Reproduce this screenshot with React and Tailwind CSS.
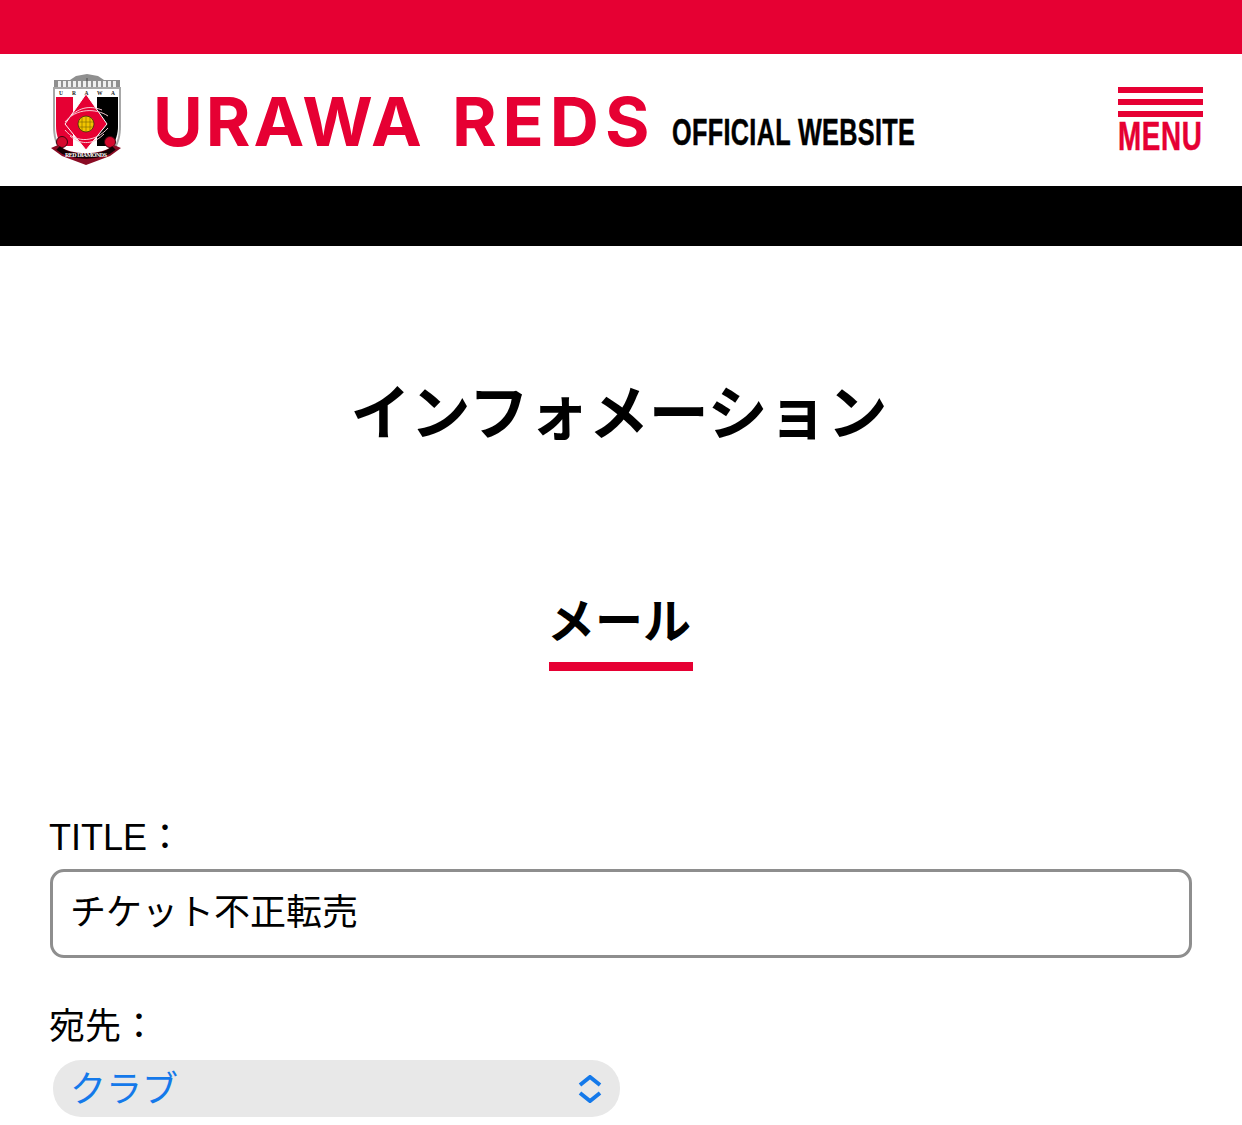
const jp = "font-['Liberation_Sans','Noto_Sans_CJK_JP',sans-serif]";
const cjk = "font-['Noto_Sans_CJK_JP','Noto_Sans',sans-serif]";

function Crest() {
  return (
    <svg width="74" height="94" viewBox="0 0 74 94" className="shrink-0 mt-[2px]">
      <path d="M4 6 L20 6 L26 2 L37 0 L48 2 L54 6 L70 6 L70 14 L4 14 Z" fill="#8f8f8f" />
      <path d="M8 7h58v6H8z" fill="#f0f0f0" />
      <path d="M12 7v6M17 7v6M22 7v6M27 7v6M32 7v6M37 4v9M42 7v6M47 7v6M52 7v6M57 7v6M62 7v6" stroke="#555" strokeWidth="1.2" />
      <path d="M3 13 H71 V52 C71 62 69 68 66 74 L37 90 L8 74 C5 68 3 62 3 52 Z" fill="#a8a8a8" />
      <path d="M5 15 H69 V52 C69 62 67 68 64 73 L37 88 L10 73 C7 68 5 62 5 52 Z" fill="#fff" />
      <path d="M6 23 H23 V72 H12 C8 66 6 60 6 52 Z" fill="#e60033" />
      <path d="M47 23 H68 V52 C68 60 66 66 62 72 H47 Z" fill="#000" />
      <path d="M36 20 L57 50 L36 76 L15 50 Z" fill="#e60033" stroke="#fff" strokeWidth="1" />
      <path d="M15 48 C26 34 46 34 58 42 M15 56 C26 70 46 68 58 54 M20 43 C30 32 42 32 52 36 M20 62 C32 72 44 70 54 60" fill="none" stroke="#f8cad4" strokeWidth="1" />
      <circle cx="36" cy="50" r="8" fill="#f2c500" stroke="#3a2e06" strokeWidth="0.8" />
      <path d="M28 48h16M29 53h14M36 42v16M32 43v14M40 43v14" stroke="#7a6200" strokeWidth="0.6" fill="none" />
      <circle cx="12" cy="68" r="5.5" fill="#d40a2e" stroke="#40040f" strokeWidth="1" />
      <circle cx="60" cy="68" r="5.5" fill="#d40a2e" stroke="#40040f" strokeWidth="1" />
      <path d="M1 74 L8 71 C20 82 52 82 64 71 L71 74 L60 82 L36 91 L12 82 Z" fill="#8a0c24" />
      <path d="M8 74 C20 85 52 85 64 74" fill="none" stroke="#140004" strokeWidth="5" />
      <text x="36" y="83" textAnchor="middle" fontSize="6" fontWeight="700" fontFamily="Liberation Serif, serif" fill="#fff" textLength="42">RED DIAMONDS</text>
      <text x="37" y="21" textAnchor="middle" fontSize="5.5" fontWeight="700" fontFamily="Liberation Serif, serif" fill="#222" textLength="56">U R A W A</text>
    </svg>
  );
}

export default function App() {
  return (
    <div className={`w-[1242px] h-[1125px] overflow-hidden bg-white text-black ${jp}`}>
      <div className="h-[54px] bg-[#e60033]" />
      <header className="h-[132px] flex items-center pl-[50px] pr-[39px]">
        <Crest />
        <div className="ml-[29px] mt-[2px] text-[#e60033] text-[68px] leading-none font-bold tracking-[3px] [word-spacing:8px] whitespace-nowrap font-['Inter',sans-serif] w-[519px]">
          URAWA <span className="tracking-[6px]">REDS</span>
        </div>
        <div className="self-end mb-[35px] w-[244px] text-[36px] leading-none font-bold whitespace-nowrap origin-left scale-x-[0.7] tracking-[0.5px] [-webkit-text-stroke:0.5px_black] font-['Liberation_Sans',sans-serif]">
          OFFICIAL WEBSITE
        </div>
        <div className="ml-auto w-[85px] flex flex-col">
          <div className="h-[6px] bg-[#e60033]" />
          <div className="h-[6px] bg-[#e60033] mt-[6px]" />
          <div className="h-[6px] bg-[#e60033] mt-[6px]" />
          <div className="w-[85px] mt-[2px] text-[#e60033] text-[40px] leading-[34px] font-bold whitespace-nowrap origin-left scale-x-[0.695] tracking-[1px] [-webkit-text-stroke:0.5px_#e60033] font-['Liberation_Sans',sans-serif]">
            MENU
          </div>
        </div>
      </header>
      <div className="h-[60px] bg-black" />
      <main className="px-[50px]">
        <h1 className={`mt-[119px] pr-[4px] text-center text-[60px] leading-[88px] font-bold whitespace-nowrap ${cjk}`}>インフォメーション</h1>
        <div className="mt-[130px] flex justify-center">
          <h2 className={`w-[144px] text-center text-[48px] leading-[68px] font-bold whitespace-nowrap border-b-[9px] border-[#e60033] pb-[11px] ${cjk}`}>
            <span className="inline-block -translate-x-[2px]">メール</span>
          </h2>
        </div>
        <label className="block mt-[140px] -ml-[1px] text-[36px] leading-[54px]">TITLE：</label>
        <div className="mt-[4px] w-[1142px] h-[89px] rounded-[14px] border-[3px] border-[#8e8e8e] flex items-center pl-[17px] pb-[2px] text-[36px]">
          チケット不正転売
        </div>
        <label className="block mt-[42px] -ml-[1px] text-[36px] leading-[54px]">宛先：</label>
        <div className="mt-[6px] ml-[3px] w-[567px] h-[57px] rounded-[28px] bg-[#e8e8e8] flex items-center justify-between pl-[17px] pr-[17px] text-[36px] text-[#1479ea]">
          <span className="leading-none pt-[2px]">クラブ</span>
          <svg width="26" height="28" viewBox="0 0 26 28" fill="none" stroke="#1479ea" strokeWidth="4">
            <path d="M3 10 L13 2 L23 10" />
            <path d="M3 18 L13 26 L23 18" />
          </svg>
        </div>
      </main>
    </div>
  );
}
